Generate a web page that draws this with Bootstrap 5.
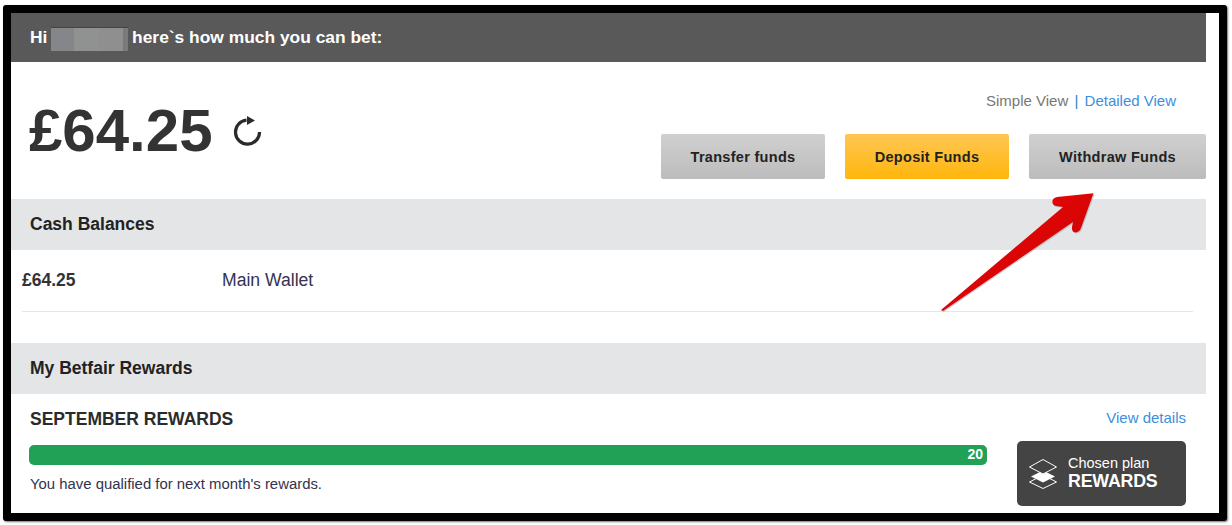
<!DOCTYPE html>
<html lang="en">
<head>
<meta charset="utf-8">
<title>Betfair balance</title>
<link href="https://cdn.jsdelivr.net/npm/bootstrap@5.3.0/dist/css/bootstrap.min.css" rel="stylesheet">
<style>
html,body{height:100%;overflow:hidden;background:#fff}
body{font-family:"Liberation Sans",Arial,sans-serif;color:#333;padding:5px 5px 4px 3px}
.shot-frame{position:relative;width:1224px;height:516px;border:8px solid #000;border-radius:3px;box-shadow:1px 1px 2px #777;background:#fff;overflow:hidden}
.shot-wrap{width:1195px}
.hello-bar{height:49px;background:#595959;color:#fff;font-size:17.4px;font-weight:700;padding-left:19px}
.blur-name{display:inline-block;width:77px;height:24px;margin:0 -1px 0 -1px;vertical-align:middle;background:linear-gradient(90deg,#85868a 0 23px,#909291 23px 48px,#8e8f8e 48px 72px,#7a7a7a 72px);border-top:1px solid #444}
.top-zone{height:137px;padding:0 0 20px 18px}
.amount{font-size:60px;font-weight:700;line-height:1;color:#333;margin-top:39px}
.refresh{margin:53px 0 0 20px}
.view-switch{font-size:15px;color:#777;margin:30px 30px 0 0;line-height:18px}
.view-switch a,.more-link{color:#3d8fdc;text-decoration:none}
.view-switch i{font-style:normal;color:#2f7fc4;margin:0 2px}
.fund-btn{width:164px;height:45px;border:0;border-radius:2px;font-weight:700;font-size:14.5px;letter-spacing:.3px;color:#222;background:linear-gradient(#d0d0d0,#bcbcbc);padding:2px 0 0}
.fund-btn.gold{background:linear-gradient(#ffc654,#ffb60c)}
.fund-wide{width:177px}
.btn-row{gap:20px;margin-top:24px}
.sect-bar{background:#e4e5e7;height:51px;padding-left:19px;font-size:17.5px;font-weight:700;color:#222}
.wallet-row{height:62px;margin:0 13px 0 11px;border-bottom:1px solid #e6e6e6;font-size:17.6px;color:#333352}
.wallet-sum{width:200px;font-weight:700;font-size:17.5px;color:#333}
.gap-strip{height:31px}
.reward-zone{padding:0 20px 0 19px}
.reward-head{height:51px;padding-top:13px}
.reward-title{font-size:17.5px;font-weight:700;color:#2b2b2b;margin-top:-1px}
.more-link{font-size:15px}
.meter{height:20px;width:958px;margin-left:-1px;border-radius:5px;background:#21a156;color:#fff;font-size:14px;font-weight:700;line-height:18px;text-align:right;padding-right:4px}
.meter-note{font-size:14.9px;margin-top:9px;line-height:20px;color:#33334d}
.plan-box{width:169px;height:65px;margin-top:-4px;border-radius:5px;background:#444;color:#fff;padding-left:12px;gap:11px}
.plan-a{font-size:14.5px;line-height:16px;display:block;margin-top:-1px}
.plan-b{font-size:17.8px;font-weight:700;line-height:19px;display:block;letter-spacing:-.2px;margin-top:1px}
.arrow-over{position:absolute;left:924px;top:178px}
</style>
</head>
<body>
<div class="shot-frame">
  <div class="shot-wrap">
    <div class="hello-bar d-flex align-items-center"><span>Hi <span class="blur-name"></span> here`s how much you can bet:</span></div>
    <div class="top-zone d-flex justify-content-between">
      <div class="d-flex align-items-start">
        <div class="amount">£64.25</div>
        <svg class="refresh" width="30" height="32" viewBox="0 0 30 32" fill="none">
          <path d="M26.500 17A12 12 0 1 1 13.500 5.200" stroke="#2b2b2b" stroke-width="3.200"/>
          <path d="M14 1l8 4.500-8 4.500z" fill="#2b2b2b"/>
        </svg>
      </div>
      <div class="d-flex flex-column align-items-end">
        <div class="view-switch">Simple View <i>|</i> <a href="#">Detailed View</a></div>
        <div class="btn-row d-flex">
          <button class="btn fund-btn">Transfer funds</button>
          <button class="btn fund-btn gold">Deposit Funds</button>
          <button class="btn fund-btn fund-wide">Withdraw Funds</button>
        </div>
      </div>
    </div>
    <div class="sect-bar d-flex align-items-center">Cash Balances</div>
    <div class="wallet-row d-flex align-items-center">
      <div class="wallet-sum">£64.25</div>
      <div>Main Wallet</div>
    </div>
    <div class="gap-strip"></div>
    <div class="sect-bar d-flex align-items-center">My Betfair Rewards</div>
    <div class="reward-zone">
      <div class="reward-head d-flex justify-content-between align-items-start">
        <div class="reward-title">SEPTEMBER REWARDS</div>
        <a class="more-link" href="#">View details</a>
      </div>
      <div class="d-flex justify-content-between align-items-start">
        <div>
          <div class="meter">20</div>
          <div class="meter-note">You have qualified for next month's rewards.</div>
        </div>
        <div class="plan-box d-flex align-items-center">
          <svg width="28" height="30" viewBox="0 0 28 30" fill="none">
            <path d="M14 16 27.500 23 14 29.500 .500 23z" stroke="#fff" stroke-width="1"/>
            <path d="M14 11.500 26 17.500 14 23.500 2 17.500z" fill="#fff"/>
            <path d="M14 .500 27.500 8 14 15 .500 8z" stroke="#fff" fill="#444" stroke-width="1"/>
          </svg>
          <div><span class="plan-a">Chosen plan</span><span class="plan-b">REWARDS</span></div>
        </div>
      </div>
    </div>
  </div>
  <svg class="arrow-over" width="170" height="130" viewBox="0 0 170 130">
    <defs><linearGradient id="redg" x1="0" y1="0" x2="1" y2="1"><stop offset="0" stop-color="#f60a0a"/><stop offset="1" stop-color="#c00000"/></linearGradient></defs>
    <path d="M6 119 128 16 121 15C116 14 116 7 122 6L158.500 2.300 146 37C144 43 136 43 137 36L138 31 8 120z" fill="#778" opacity=".35" transform="translate(1 1)"/>
    <path d="M6 119 128 16 121 15C116 14 116 7 122 6L158.500 2.300 146 37C144 43 136 43 137 36L138 31 8 120z" fill="url(#redg)"/>
  </svg>
</div>
<script src="https://cdn.jsdelivr.net/npm/bootstrap@5.3.0/dist/js/bootstrap.bundle.min.js"></script>
</body>
</html>
